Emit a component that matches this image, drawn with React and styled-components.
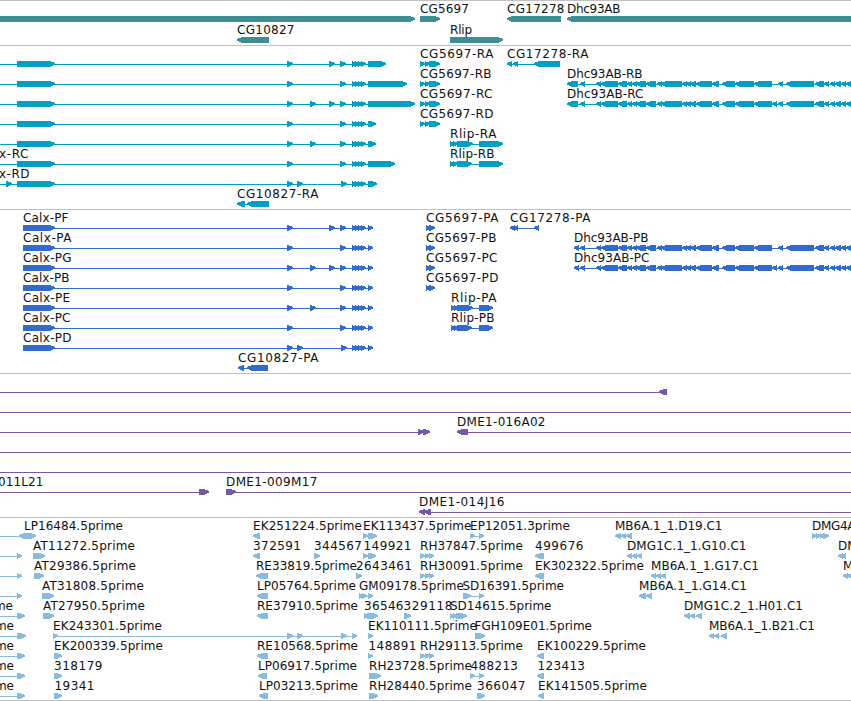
import React from "react";
import styled, { createGlobalStyle } from "styled-components";

const GlobalStyle = createGlobalStyle`
  body {
    margin: 0;
    background: white;
    overflow: hidden;
  }
`;

const Browser = styled.main`
  display: flex;
  flex-direction: column;
  width: 851px;
  height: 701px;
  overflow: hidden;
  background: white;
`;

const TrackContainer = styled.section`
  box-sizing: border-box;
  flex: none;
  display: flex;
  flex-direction: column;
  gap: ${props => props.$gap || 0}px;
  height: ${props => props.$height}px;
  padding-top: 1px;
  border-top: 1px solid #c0c0c0;
  color: ${props => props.$color};
  &:last-child {
    border-bottom: 1px solid #c0c0c0;
  }
`;

const Lane = styled.svg`
  display: block;
  flex: none;
  width: 851px;
  height: 20px;
  overflow: hidden;
`;

const Glyph = styled.polygon`
  fill: currentColor;
  shape-rendering: crispEdges;
`;

const Intron = styled.rect`
  fill: currentColor;
  shape-rendering: crispEdges;
`;

const Label = styled.text`
  fill: #111;
  font-family: "DejaVu Sans", sans-serif;
  font-size: 12px;
`;

const HEAD = 4;

// label, left and right edge of its text, direction, exons, optional extent of the line
const f = (label, x1, x2, dir, exons, span) => ({ label, x1, x2, dir, exons, span });

const calxR = (mid, end, label, x2, first = []) =>
  f(label, -1, x2, 1, [...first, [17, 55], ...mid, [352, 357], [355, 360], [358, 363], [361, 366], [368, end]], [0, end]);

const calxP = (letter, x2, mid) =>
  f("Calx-P" + letter, 23, x2, 1, [[23, 55], ...mid, [352, 357], [355, 360], [358, 363], [361, 366], [368, 373]]);

const A = [287, 293], B = [310, 316], C = [329, 335], D = [340, 346], E = [297, 303], D2 = [341, 347];

const cg5697R = (letter, x2) =>
  f("CG5697-R" + letter, 420, x2, 1, [[420, 425], [425, 430], [429, 440]]);
const cg5697P = (letter, x2) =>
  f("CG5697-P" + letter, 426, x2, 1, [[426, 431], [429, 435]]);

const dhcTail = [
  [596, 601], [601, 618], [618, 627], [627, 632], [632, 637], [636, 646], [646, 656],
  [657, 662], [661, 682], [682, 687], [686, 691], [690, 696], [696, 712], [712, 719],
  [722, 735], [735, 754], [754, 772], [778, 783], [786, 814], [815, 824], [824, 829],
  [830, 835], [835, 841], [841, 846], [846, 853]
];
const dhc = (label, x1, x2, exons) =>
  f(label, x1, x2, -1, [...exons, [580, 585], ...dhcTail]);

const line = (from, to) => f(null, 0, 0, 1, [], [from, to]);
const left = (end, label) => f(label, end[0] - 18.5, label ? end[0] : 0, 1, [[17, end[1]]], [0, 20]);
const rh = (label) => f(label, 420, 522.5, 1, [[420, 425], [425, 430], [429, 434]]);

const tracks = [
  {
    name: "genes", color: "#3f8e94", height: 45, gap: 1,
    rows: [
      [
        f(null, 0, 0, 1, [[-10, 415]]),
        f("CG5697", 420, 468.5, 1, [[420, 440]]),
        f("CG17278", 507, 564, -1, [[507, 561]]),
        f("Dhc93AB", 567, 620, -1, [[567, 860]])
      ],
      [
        f("CG10827", 237, 294, -1, [[237, 269]]),
        f("Rlip", 450, 471.5, 1, [[450, 503]])
      ]
    ]
  },
  {
    name: "transcripts", color: "#009fc3", height: 164,
    rows: [
      [
        calxR([A, C, D], 386),
        cg5697R("A", 493),
        f("CG17278-RA", 507, 588, -1, [[507, 512], [513, 518], [534, 560]])
      ],
      [calxR([A, D], 407), cg5697R("B", 491), dhc("Dhc93AB-RB", 567, 642, [[567, 578]])],
      [calxR([A, B, C, D], 415), cg5697R("C", 492), dhc("Dhc93AB-RC", 567, 643, [[567, 578], [772, 777]])],
      [calxR([A, D], 376), cg5697R("D", 493)],
      [
        calxR([A, B, D], 376),
        f("Rlip-RA", 450, 496, 1, [[450, 455], [453, 458], [457, 473], [479, 503]])
      ],
      [
        calxR([A, D], 395, "x-RC", 28),
        f("Rlip-RB", 450, 494, 1, [[450, 455], [453, 458], [457, 472], [479, 503]])
      ],
      [calxR([A, E, D2], 377, "x-RD", 29, [[6, 12]])],
      [f("CG10827-RA", 237, 318, -1, [[237, 245], [247, 269]])]
    ]
  },
  {
    name: "proteins", color: "#316ccc", height: 164,
    rows: [
      [
        calxP("F", 68, [A, C, D]),
        cg5697P("A", 498),
        f("CG17278-PA", 510, 590, -1, [[510, 515], [513, 518], [534, 539]])
      ],
      [calxP("A", 71, [A, D]), cg5697P("B", 496), dhc("Dhc93AB-PB", 574, 648, [[574, 579]])],
      [calxP("G", 71, [A, B, C, D]), cg5697P("C", 497), dhc("Dhc93AB-PC", 574, 649, [[574, 579], [772, 777]])],
      [calxP("B", 69, [A, D]), cg5697P("D", 498)],
      [
        calxP("E", 69.5, [A, B, D]),
        f("Rlip-PA", 451, 496, 1, [[451, 456], [454, 459], [457, 473], [479, 493]])
      ],
      [
        calxP("C", 70, [A, D]),
        f("Rlip-PB", 451, 494, 1, [[451, 456], [454, 459], [457, 472], [479, 493]])
      ],
      [calxP("D", 71, [A, E, D2])],
      [f("CG10827-PA", 238, 318, -1, [[238, 244], [247, 268]])]
    ]
  },
  {
    name: "clones", color: "#7658a8", height: 144,
    rows: [
      [f(null, 0, 0, -1, [[659, 667]], [0, 667])],
      [line(0, 851)],
      [
        f(null, 0, 0, 1, [[418, 424], [423, 430]], [0, 430]),
        f("DME1-016A02", 457, 545, -1, [[457, 468]], [457, 851])
      ],
      [line(0, 851)],
      [line(0, 851)],
      [
        f("011L21", -2, 43, 1, [[199, 209]], [0, 209]),
        f("DME1-009M17", 226, 317, 1, [[226, 236]], [226, 851])
      ],
      [f("DME1-014J16", 419, 504, -1, [[419, 425], [424, 431]], [419, 851])]
    ]
  },
  {
    name: "cdnas", color: "#88bbdd", height: 184,
    rows: [
      [
        f(null, 0, 0, -1, [[19, 32]], [0, 28]),
        f("LP16484.5prime", 24, 122.5, 1, [[26, 36]]),
        f("EK251224.5prime", 253, 361.5, -1, [[253, 260]]),
        f("EK113437.5prime", 363, 471, 1, [[363, 368], [368, 377]]),
        f("EP12051.3prime", 470, 569.5, 1, [[470, 475], [479, 484]]),
        f("MB6A.1_1.D19.C1", 615, 722, -1, [[615, 621], [621, 626], [626, 632]]),
        f("DMG4A", 812, 855, 1, [[812, 817], [816, 821], [820, 825], [823, 829]])
      ],
      [
        left([0, 22]),
        f("AT11272.5prime", 33, 134.5, 1, [[33, 45]]),
        f("372591", 253, 300.5, -1, [[253, 260]]),
        f("344567", 314, 361.5, 1, [[314, 320]]),
        f("149921", 363.5, 411, 1, [[363, 368], [368, 376]]),
        rh("RH37847.5prime"),
        f("499676", 535, 583, -1, [[535, 544]]),
        f("DMG1C.1_1.G10.C1", 627, 746, -1, [[627, 632], [632, 637], [637, 642]]),
        f("DM", 838, 857, -1, [[838, 843], [841, 846]])
      ],
      [
        left([0, 22]),
        f("AT29386.5prime", 34, 135.5, 1, [[34, 44]]),
        f("RE33819.5prime", 256, 356.5, -1, [[256, 268]]),
        f("2643461", 356, 411.5, 1, [[356, 362]]),
        rh("RH30091.5prime"),
        f("EK302322.5prime", 535, 643.5, -1, [[535, 544]]),
        f("MB6A.1_1.G17.C1", 651, 758.5, -1, [[651, 656], [656, 661], [661, 666]]),
        f("M", 843, 853, -1, [[843, 848], [847, 853]])
      ],
      [
        left([0, 22]),
        f("AT31808.5prime", 42, 143.5, 1, [[42, 54]]),
        f("LP05764.5prime", 257, 355.5, -1, [[257, 268]]),
        f("GM09178.5prime", 359, 463.5, 1, [[359, 364], [362, 367], [368, 373]]),
        f("SD16391.5prime", 462.5, 563.5, 1, [[463, 471], [479, 484]]),
        f("MB6A.1_1.G14.C1", 639, 746.5, -1, [[639, 646], [646, 652]])
      ],
      [
        left([12.5, 25], "me"),
        f("AT27950.5prime", 43, 144.5, 1, [[43, 54]]),
        f("RE37910.5prime", 257, 357.5, -1, [[257, 268]]),
        f("36546", 364, 403, 1, [[364, 369], [367, 378]]),
        f("329118", 403.5, 452, 1, [[404, 411]]),
        f("SD14615.5prime", 450, 551, 1, [[450, 455], [453, 458], [456, 467]]),
        f("DMG1C.2_1.H01.C1", 684, 802.5, -1, [[684, 690], [690, 695], [696, 702]])
      ],
      [
        left([13.5, 26], "me"),
        f("EK243301.5prime", 53, 161.5, 1, [[53, 58], A, E, D2, [352, 357]]),
        f("EK110111.5prime", 368, 476.5, 1, [[368, 373]]),
        f("FGH109E01.5prime", 474.5, 591.5, 1, [[475, 485]]),
        f("MB6A.1_1.B21.C1", 709, 814.5, -1, [[709, 714], [714, 719], [721, 727]])
      ],
      [
        left([13.5, 25], "me"),
        f("EK200339.5prime", 54, 162.5, 1, [[54, 62]]),
        f("RE10568.5prime", 257, 357.5, -1, [[257, 268]]),
        f("148891", 368.5, 416, 1, [[368, 373]]),
        rh("RH29113.5prime"),
        f("EK100229.5prime", 537, 645.5, -1, [[537, 544]])
      ],
      [
        left([13.5, 25], "me"),
        f("318179", 54, 102, 1, [[54, 62]]),
        f("LP06917.5prime", 258, 356.5, -1, [[258, 267]]),
        f("RH23728.5prime", 369, 471.5, 1, [[369, 381]]),
        f("488213", 470.5, 517.5, 1, [[470, 475], [479, 484]]),
        f("123413", 537.5, 584.5, -1, [[537, 544]])
      ],
      [
        left([13.5, 25], "me"),
        f("19341", 54.5, 94, 1, [[54, 62]]),
        f("LP03213.5prime", 259, 357.5, -1, [[259, 268]]),
        f("RH28440.5prime", 369, 471.5, 1, [[369, 378]]),
        f("366047", 477, 525, 1, [[477, 485]]),
        f("EK141505.5prime", 538, 646.5, -1, [[538, 544]])
      ]
    ]
  }
];

function Exon({from, to, dir}){
  // blunt tip, so that short exons still read as arrows
  const points = dir > 0 ?
    `${from},14 ${to - HEAD - 0.6},14 ${to + 0.4},16.4 ${to + 0.4},17.4 ${to - HEAD - 0.6},20 ${from},20` :
    `${to},14 ${from + HEAD + 0.6},14 ${from - 0.4},16.4 ${from - 0.4},17.4 ${from + HEAD + 0.6},20 ${to},20`;
  return <Glyph points={points}/>;
}

function Feature({label, x1, x2, dir, exons, span}){
  const [from, to] = span || [
    Math.min(...exons.map((exon) => exon[0])) + 1,
    Math.max(...exons.map((exon) => exon[1])) - 1
  ];

  return (
    <g>
      <Intron x={from} y={17} width={to - from} height={1}/>
      {exons.map(([a, b]) => <Exon key={a} from={a} to={b} dir={dir}/>)}
      {label && <Label x={x1} y={11} textLength={x2 - x1 + 0.5}>{label}</Label>}
    </g>
  );
}

function Track({color, height, gap, rows}){
  return (
    <TrackContainer $color={color} $height={height} $gap={gap}>
      {rows.map((row, i) => (
        <Lane key={i} viewBox="0 0 851 20">
          {row.map((feature, j) => <Feature key={j} {...feature}/>)}
        </Lane>
      ))}
    </TrackContainer>
  );
}

function App(){
  return (
    <>
      <GlobalStyle/>
      <Browser>
        {tracks.map((track) => <Track key={track.name} {...track}/>)}
      </Browser>
    </>
  );
}

export default App;
